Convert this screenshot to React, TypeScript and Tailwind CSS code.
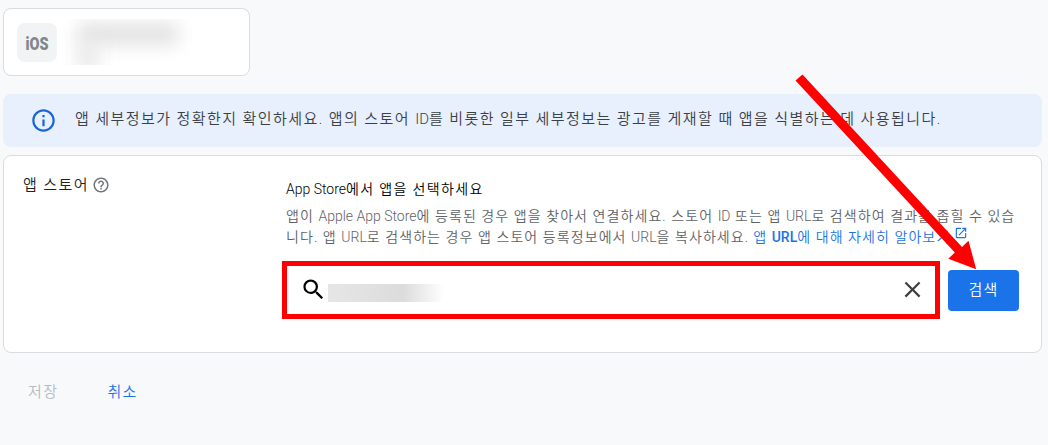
import { MdClose, MdHelpOutline, MdOpenInNew, MdOutlineInfo, MdSearch } from "react-icons/md"

// Korean runs are tracked out, latin words keep their normal spacing
const En = ({ children, bold }: { children: string; bold?: boolean }) => (
  <span className={bold ? "font-medium tracking-normal" : "tracking-normal"}>{children}</span>
)

const AppCard = () => (
  <div className="flex w-[247px] h-[68px] rounded-lg border border-[#dadce0] bg-white pl-[13px] pt-[14px]">
    <div className="flex h-[39px] w-10 shrink-0 items-center justify-center rounded-lg bg-[#f1f3f4]">
      <svg width="36" height="28" viewBox="0 0 36 28">
        <text
          x="6.5"
          y="21"
          textLength="23"
          lengthAdjust="spacingAndGlyphs"
          className="fill-[#80868b] font-['Roboto'] text-[19px] font-black"
        >
          iOS
        </text>
      </svg>
    </div>
    <div className="-mt-1 ml-px h-[46px] w-[135px] overflow-hidden">
      <div className="ml-5 mt-1 h-[22px] w-[100px] bg-[#e2e2e2] blur-[9px]"></div>
      <div className="ml-5 -mt-1 h-8 w-[20px] bg-[#e8e8e8] blur-[9px]"></div>
    </div>
  </div>
)

const InfoBanner = () => (
  <div className="mt-[18px] flex h-[53px] items-center rounded-lg bg-[#e8f0fe] pl-[27px]">
    <MdOutlineInfo size={27} className="shrink-0 text-[#1967d2]" />
    <p className="ml-[18px] -mt-[2px] whitespace-nowrap text-[15px] font-[350] tracking-[1.43px] text-[#3c4043]">
      앱 세부정보가 정확한지 확인하세요. 앱의 스토어 <En>ID</En>를 비롯한 일부 세부정보는 광고를 게재할 때 앱을 식별하는 데 사용됩니다.
    </p>
  </div>
)

const StoreSearch = () => (
  <div className="-ml-1 mt-[13px] flex items-center">
    <div className="flex h-[58px] w-[658px] items-center border-[5px] border-[#ff0000] bg-white pl-[13px] pr-[9px]">
      <MdSearch size={27} className="-mt-[2px] shrink-0 text-black" />
      <div className="ml-[1px] mt-[5px] h-[18px] w-[116px] bg-linear-to-r from-[#e6e6e6] via-[#dcdcdc] via-65% to-white"></div>
      <MdClose size={27} className="-mt-[2px] ml-auto shrink-0 text-[#3c4043]" />
    </div>
    <button className="ml-2 h-[41px] w-[71px] rounded bg-[#1a73e8] pt-px text-[15px] font-[350] tracking-[1.2px] text-white">
      검색
    </button>
  </div>
)

const StoreSection = () => (
  <section className="mt-2 flex h-[198px] rounded-lg border border-[#dadce0] bg-white">
    <div className="flex h-[22px] w-[282px] shrink-0 items-center pl-[19px] mt-[18px]">
      <h2 className="text-[15px] font-[350] tracking-[1.4px] text-[#202124]">앱 스토어</h2>
      <MdHelpOutline size={18} className="ml-[3px] text-[#70757a]" />
    </div>
    <div className="mt-[23px]">
      <h3 className="text-[14px] font-[350] leading-[20px] tracking-[1.35px] text-black">
        <En>App Store</En>에서 앱을 선택하세요
      </h3>
      <div className="mt-[7px] whitespace-nowrap text-[14px] font-[350] leading-[21px] tracking-[1.08px] text-[#5f6368]">
        <p>
          앱이 <En>Apple App Store</En>에 등록된 경우 앱을 찾아서 연결하세요. 스토어 <En>ID</En> 또는 앱 <En>URL</En>로 검색하여 결과를 좁힐 수 있습
        </p>
        <p className="flex">
          <span>
            니다. 앱 <En>URL</En>로 검색하는 경우 앱 스토어 등록정보에서 <En>URL</En>을 복사하세요.
          </span>
          <a className="ml-1 flex text-[#1a73e8]">
            <span>
              앱 <En bold>URL</En>에 대해 자세히 알아보기
            </span>
            <MdOpenInNew size={14} className="ml-1 -mt-px" />
          </a>
        </p>
      </div>
      <StoreSearch />
    </div>
  </section>
)

// Points from the info banner down to the search button
const Arrow = () => (
  <svg className="pointer-events-none absolute left-0 top-0" width="1048" height="445" viewBox="0 0 1048 445">
    <polygon
      className="fill-[#ff0000]"
      points="795.5,80.5 802.5,74.5 962,247 968.5,240.7 976.2,269.2 948.3,258.8 954.8,252.5"
    />
  </svg>
)

export default function App() {
  return (
    <main className="relative h-[445px] w-[1048px] overflow-hidden bg-[#f8f9fb] pl-[3px] pr-[6px] pt-2 font-['Roboto','Noto_Sans_CJK_KR',sans-serif]">
      <AppCard />
      <InfoBanner />
      <StoreSection />
      <div className="mt-7 flex pl-[25px] text-[15px] font-[350] leading-[22px] tracking-[1.4px]">
        <button className="text-[#b8babd]">저장</button>
        <button className="ml-[49px] text-[#1a73e8]">취소</button>
      </div>
      <Arrow />
    </main>
  )
}
